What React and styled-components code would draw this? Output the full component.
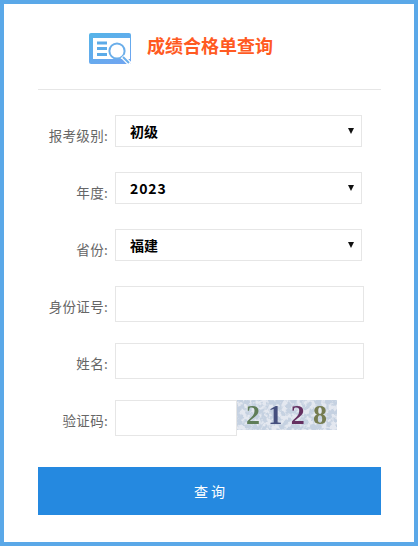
import React from 'react';
import styled, { createGlobalStyle } from 'styled-components';

const FONT = '"Noto Sans CJK SC", "Open Sans", sans-serif';

const GlobalStyle = createGlobalStyle`
    html, body {
        margin: 0;
        padding: 0;
        background: #fff;
    }
    * {
        box-sizing: border-box;
    }
`;

const FIELDS = [
    { label: '报考级别', type: 'select', value: '初级', options: ['初级', '中级', '高级'] },
    { label: '年度', type: 'select', value: '2023', options: ['2023', '2022', '2021'], spaced: true },
    { label: '省份', type: 'select', value: '福建', options: ['福建', '北京', '上海'] },
    { label: '身份证号', type: 'input' },
    { label: '姓名', type: 'input' },
];

const LogoIcon = () => (
    <svg width="42" height="31" viewBox="0 0 42 31">
        <defs>
            <linearGradient id="logo" x1="0" y1="0" x2="0.6" y2="1">
                <stop offset="0" stopColor="#54b4e8" />
                <stop offset="1" stopColor="#6ea6f0" />
            </linearGradient>
        </defs>
        <rect x="0" y="0" width="42" height="31" rx="2" fill="url(#logo)" />
        <rect x="4" y="5" width="37" height="21" fill="#fff" />
        <rect x="8" y="8.5" width="10" height="3" fill="#5cabe8" />
        <rect x="8" y="14" width="10" height="3" fill="#5cabe8" />
        <rect x="8" y="20" width="10" height="3" fill="#5cabe8" />
        <circle cx="28" cy="18" r="7.6" fill="#fff" stroke="#6aaeea" strokeWidth="2" />
        <path d="M33.5 23.5 L41 31" stroke="#fff" strokeWidth="4.5" />
        <path d="M34 24 L40 30" stroke="#6aaeea" strokeWidth="2" />
    </svg>
);

const CaptchaNoise = () => (
    <NoiseSvg width="100" height="30">
        <filter id="noise" x="0" y="0" width="100%" height="100%">
            <feTurbulence type="fractalNoise" baseFrequency="0.2" numOctaves="3" seed="7" />
            <feColorMatrix values="0 0 0 0 0.56  0 0 0 0 0.64  0 0 0 0 0.75  6 0 0 0 -2.4" />
        </filter>
        <rect width="100" height="30" fill="#e4e8f0" />
        <rect width="100" height="30" filter="url(#noise)" />
    </NoiseSvg>
);

const App = () => {
    return (
        <>
            <GlobalStyle />
            <Page>
                <Header>
                    <LogoIcon />
                    <Title>成绩合格单查询</Title>
                </Header>
                <Form>
                    {FIELDS.map((field) => (
                        <Row key={field.label}>
                            <Label>{field.label}:</Label>
                            {field.type === 'select' ? (
                                <SelectBox>
                                    <Select defaultValue={field.value} $spaced={field.spaced}>
                                        {field.options.map((opt) => (
                                            <option key={opt}>{opt}</option>
                                        ))}
                                    </Select>
                                    <Arrow />
                                </SelectBox>
                            ) : (
                                <TextInput />
                            )}
                        </Row>
                    ))}
                    <Row>
                        <Label>验证码:</Label>
                        <CaptchaInput />
                        <Captcha>
                            <CaptchaNoise />
                            <Digit $color="#5f7d58">2</Digit>
                            <Digit $color="#454f7e">1</Digit>
                            <Digit $color="#642f60">2</Digit>
                            <Digit $color="#757c50">8</Digit>
                        </Captcha>
                    </Row>
                </Form>
                <SubmitButton type="button">查 询</SubmitButton>
            </Page>
        </>
    );
};

const Page = styled.div`
    width: 418px;
    height: 546px;
    border: 4px solid #5aa8e8;
    padding: 0 33px 0 34px;
    font-family: ${FONT};
`;

const Header = styled.div`
    display: flex;
    align-items: center;
    height: 86px;
    padding: 4px 0 0 51px;
    border-bottom: 1px solid #e6e6e6;
`;

const Title = styled.h1`
    margin: 0 0 7px 16px;
    font-size: 18px;
    line-height: 26px;
    font-weight: 700;
    color: #ff5a22;
`;

const Form = styled.div`
    display: grid;
    grid-auto-rows: 57px;
    margin-top: 25px;
`;

const Row = styled.div`
    display: flex;
    align-items: flex-start;
`;

const Label = styled.label`
    width: 70px;
    margin-right: 7px;
    font-size: 13.5px;
    line-height: 41px;
    letter-spacing: 0.3px;
    color: #666;
    text-align: right;
    white-space: nowrap;
`;

const SelectBox = styled.div`
    position: relative;
    width: 247px;
    height: 32px;
`;

const Select = styled.select`
    display: block;
    width: 100%;
    height: 100%;
    padding-left: 14px;
    border: 1px solid #e6e6e6;
    border-radius: 0;
    background: #fff;
    appearance: none;
    font-family: ${FONT};
    font-size: 14px;
    font-weight: 700;
    letter-spacing: ${(props) => (props.$spaced ? '0.9px' : '0')};
    color: #000;
    outline: none;
`;

const Arrow = styled.span`
    position: absolute;
    top: 13px;
    right: 8px;
    border-top: 6px solid #111;
    border-left: 3.5px solid transparent;
    border-right: 3.5px solid transparent;
    pointer-events: none;
`;

const TextInput = styled.input`
    width: 249px;
    height: 36px;
    border: 1px solid #e6e6e6;
    background: #fff;
    outline: none;
`;

const CaptchaInput = styled(TextInput)`
    width: 122px;
`;

const Captcha = styled.div`
    position: relative;
    display: flex;
    justify-content: space-between;
    align-items: center;
    width: 100px;
    height: 30px;
    padding: 0 10px 0 9px;
    overflow: hidden;
`;

const NoiseSvg = styled.svg`
    position: absolute;
    top: 0;
    left: 0;
`;

const Digit = styled.span`
    position: relative;
    font-family: "Liberation Serif", serif;
    font-size: 28px;
    font-weight: 700;
    line-height: 30px;
    color: ${(props) => props.$color};
    filter: blur(0.6px);
`;

const SubmitButton = styled.button`
    display: block;
    width: 343px;
    height: 48px;
    margin-top: 10px;
    border: 0;
    background: #2589e0;
    font-family: ${FONT};
    font-size: 14px;
    color: #fff;
`;

export default App;
